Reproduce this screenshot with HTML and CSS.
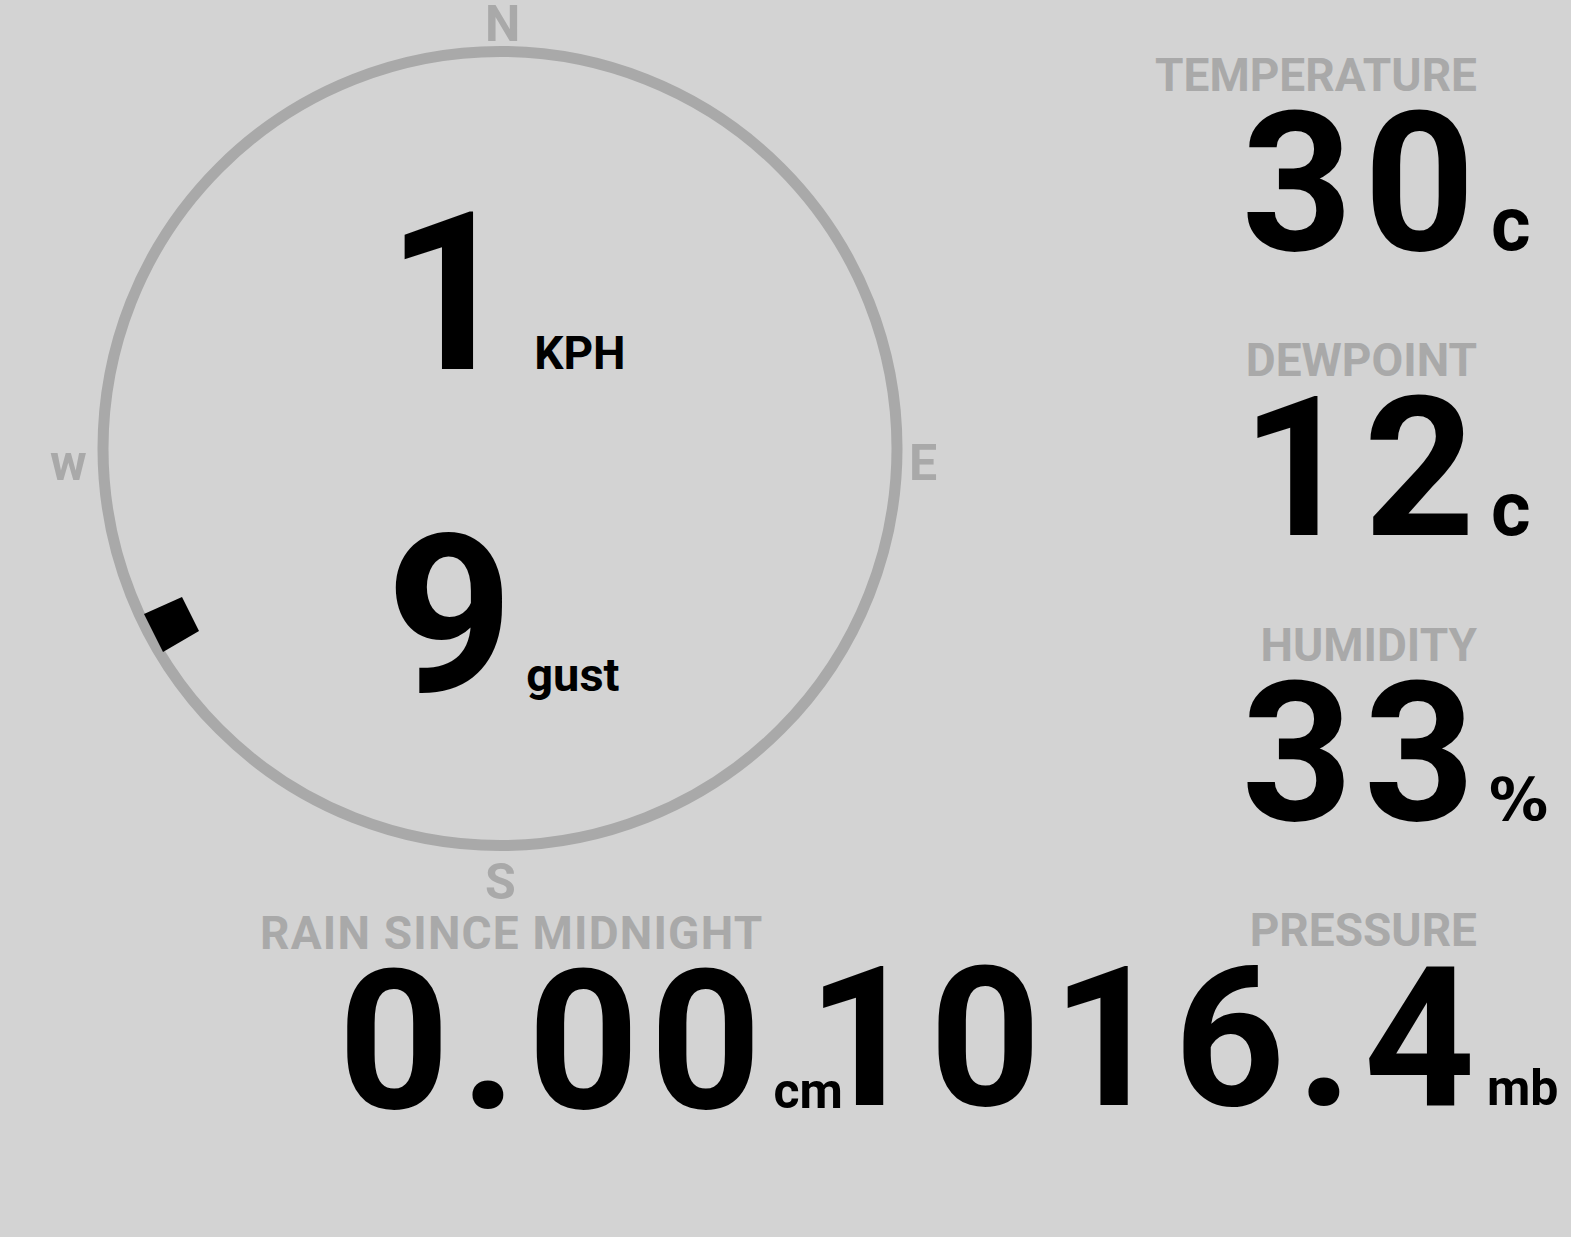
FILE: index.html
```html
<!DOCTYPE html>
<html lang="en">
<head>
  <meta charset="UTF-8">
  <meta name="viewport" content="width=device-width, initial-scale=1.0">
  <title>Weather Station</title>
  <link rel="stylesheet" href="styles.css">
</head>
<body>
  <div class="dashboard">
    <!-- Wind compass + rain -->
    <div class="left">
      <div class="compass">
        <svg class="dial" width="1000" height="910" viewBox="0 0 1000 910">
          <circle class="ring" cx="500" cy="448.5" r="397"/>
          <polygon class="needle" points="144,614 182,597 199,631 163,652"/>
        </svg>
        <span class="point point-n">N</span>
        <span class="point point-e">E</span>
        <span class="point point-s">S</span>
        <span class="point point-w">w</span>

        <div class="wind">
          <div class="reading reading-speed">
            <span class="wind-value">1</span>
            <span class="wind-unit">KPH</span>
          </div>
          <div class="reading reading-gust">
            <span class="wind-value">9</span>
            <span class="wind-unit gust">gust</span>
          </div>
        </div>
      </div>

      <div class="stat stat-rain">
        <div class="stat-label">RAIN SINCE MIDNIGHT</div>
        <div class="stat-value">
          <span class="num">0.00</span>
          <span class="unit unit-small">cm</span>
        </div>
      </div>
    </div>

    <!-- Readings column -->
    <div class="right">
      <div class="stat">
        <div class="stat-label">TEMPERATURE</div>
        <div class="stat-value">
          <span class="num">30</span>
          <span class="unit unit-deg">c</span>
        </div>
      </div>
      <div class="stat">
        <div class="stat-label">DEWPOINT</div>
        <div class="stat-value">
          <span class="num">12</span>
          <span class="unit unit-deg">c</span>
        </div>
      </div>
      <div class="stat">
        <div class="stat-label">HUMIDITY</div>
        <div class="stat-value">
          <span class="num">33</span>
          <span class="unit unit-pct">%</span>
        </div>
      </div>
      <div class="stat">
        <div class="stat-label">PRESSURE</div>
        <div class="stat-value">
          <span class="num">1016.4</span>
          <span class="unit unit-small">mb</span>
        </div>
      </div>
    </div>
  </div>
</body>
</html>
```

FILE: styles.css
```css
/* Basic Reset */
* {
  margin: 0;
  padding: 0;
  box-sizing: border-box;
}

body {
  background-color: #d3d3d3;
  font-family: Roboto, "Liberation Sans", sans-serif;
  font-weight: 700;
  color: #000;
  overflow: hidden;
}

.dashboard {
  display: flex;
  width: 1571px;
  height: 1237px;
}

.left {
  width: 1000px;
  flex-shrink: 0;
}

/* Compass */
.compass {
  position: relative;
  height: 910px;
  display: flex;
  justify-content: center;
}

.dial {
  position: absolute;
  top: 0;
  left: 0;
}

.ring {
  fill: none;
  stroke: #a9a9a9;
  stroke-width: 11;
}

.needle {
  fill: #000;
}

.point {
  position: absolute;
  font-size: 50px;
  line-height: 46px;
  color: #a9a9a9;
}

.point-n { top: 1px; left: 485px; }
.point-e { top: 440px; left: 909px; }
.point-s { top: 859px; left: 485px; }
.point-w { top: 440px; left: 50px; }

.wind {
  position: relative;
  display: flex;
  flex-direction: column;
  align-items: flex-start;
  padding-top: 204px;
  padding-left: 12px;
  gap: 142px;
}

.reading {
  display: flex;
  align-items: baseline;
}

.wind-value {
  font-size: 221px;
  line-height: 180px;
}

.wind-unit {
  font-size: 46px;
  line-height: 46px;
  margin-left: 21px;
}

.wind-unit.gust {
  font-size: 47px;
  margin-left: 13px;
}

/* Stats */
.right {
  width: 400px;
  margin-left: auto;
  margin-right: 12px;
  display: flex;
  flex-direction: column;
  align-items: flex-end;
  padding-top: 52px;
  gap: 73px;
}

.stat {
  display: flex;
  flex-direction: column;
  align-items: flex-end;
  white-space: nowrap;
}

.stat-label {
  font-size: 46px;
  line-height: 46px;
  color: #a9a9a9;
  margin-right: 82px;
}

.stat-value {
  display: flex;
  align-items: baseline;
  margin-top: 6px;
}

.num {
  font-size: 194px;
  line-height: 160px;
  letter-spacing: 11px;
  margin-right: -11px;
}

.unit {
  width: 84px;
  padding-left: 16px;
}

.unit-deg {
  font-size: 76px;
  line-height: 76px;
}

.unit-pct {
  font-family: "DejaVu Sans", sans-serif;
  font-size: 59px;
  line-height: 59px;
  padding-left: 14px;
}

.unit-small {
  font-size: 50px;
  line-height: 50px;
  padding-left: 12px;
}

.stat-rain {
  width: fit-content;
  margin-left: 260px;
}

.stat-rain .stat-label {
  letter-spacing: 1.2px;
}
```
